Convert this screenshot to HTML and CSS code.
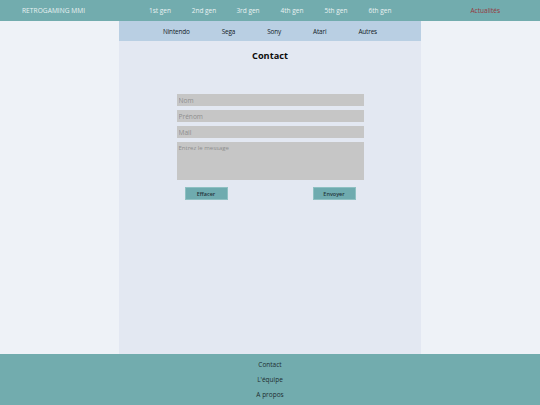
FILE: index.html
```html
<!DOCTYPE html>
<html lang="fr">
<head>
<meta charset="utf-8">
<title>Contact - Retrogaming MMI</title>
<link rel="stylesheet" href="styles.css">
</head>
<body>
<header class="topbar">
  <div class="logo">RETROGAMING MMI</div>
  <nav class="gens">
    <a>1st gen</a><a>2nd gen</a><a>3rd gen</a><a>4th gen</a><a>5th gen</a><a>6th gen</a>
  </nav>
  <a class="news">Actualités</a>
</header>
<main class="column">
  <nav class="brands">
    <a>Nintendo</a><a>Sega</a><a>Sony</a><a>Atari</a><a>Autres</a>
  </nav>
  <h1 class="title">Contact</h1>
  <form class="form">
    <input class="field" type="text" placeholder="Nom">
    <input class="field" type="text" placeholder="Prénom">
    <input class="field" type="text" placeholder="Mail">
    <textarea class="field area" placeholder="Entrez le message"></textarea>
    <div class="actions">
      <button class="btn" type="reset">Effacer</button>
      <button class="btn" type="button">Envoyer</button>
    </div>
  </form>
</main>
<footer class="footer">
  <a>Contact</a>
  <a>L'équipe</a>
  <a>A propos</a>
</footer>
</body>
</html>
```
FILE: styles.css
```css
* { box-sizing: border-box; }
html, body { margin: 0; padding: 0; }
body {
  background: #eef2f7;
  font-family: "Open Sans", "Noto Sans", sans-serif;
  width: 540px;
  height: 405px;
  overflow: hidden;
}
a { cursor: pointer; }
.topbar {
  height: 21px;
  background: #72acae;
  display: flex;
  align-items: center;
  padding: 0 40px 0 22px;
  font-size: 6.5px;
  color: #e9f2f2;
}
.logo { width: 116px; font-size: 6.6px; letter-spacing: 0.05px; }
.gens { display: flex; }
.gens a { width: 44px; text-align: center; }
.news { margin-left: auto; color: #97373d; }
.column {
  width: 302px;
  height: 333px;
  margin: 0 auto;
  background: #e3e8f2;
  display: flex;
  flex-direction: column;
  align-items: center;
}
.brands {
  align-self: stretch;
  height: 20px;
  background: #b9cfe3;
  display: flex;
  justify-content: center;
  align-items: center;
  gap: 32px;
  font-size: 6.4px;
  letter-spacing: -0.15px;
  color: #111a1f;
}
.title {
  margin: 8px 0 0;
  font-size: 9.2px;
  font-weight: 700;
  color: #0c0c0c;
  line-height: 14px;
}
.form {
  width: 187px;
  margin-top: 31px;
  display: flex;
  flex-direction: column;
  gap: 4px;
}
.field {
  display: block;
  width: 100%;
  height: 12px;
  border: none;
  background: #c6c6c6;
  padding: 0 2px;
  font-family: inherit;
  font-size: 6.6px;
  color: #555;
  outline: none;
}
.field::placeholder { color: #8e8e8e; }
.area {
  height: 38px;
  padding: 2px 2px;
  resize: none;
  line-height: 8px;
  font-size: 6px;
}
.actions {
  display: flex;
  justify-content: space-between;
  padding: 0 8px;
  margin-top: 3px;
}
.btn {
  width: 43px;
  height: 13px;
  background: #6fabaf;
  border: 1px solid #8fc0c2;
  padding: 0;
  font-family: inherit;
  font-size: 5.5px;
  font-weight: 600;
  color: #23343a;
}
.footer {
  height: 51px;
  background: #72acae;
  display: flex;
  flex-direction: column;
  align-items: center;
  padding-top: 3px;
  font-size: 6.5px;
  color: #1f2c30;
}
.footer a { line-height: 15px; }
```
